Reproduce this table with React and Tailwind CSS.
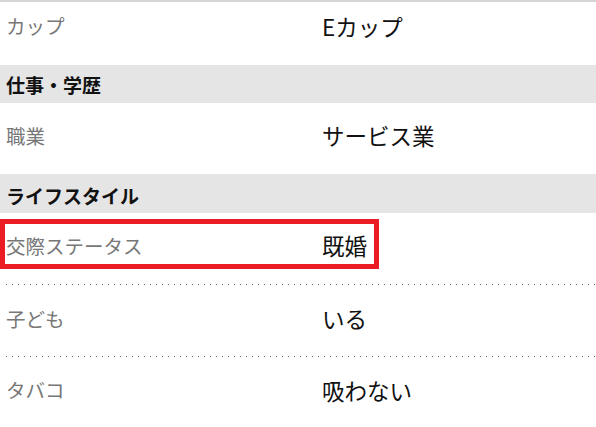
const font = { fontFamily: '"Noto Sans CJK JP", "Noto Sans", sans-serif' };

function Row({ label, value, className = "h-[72px]", highlight = false, dotted = false }) {
  return (
    <div className={`relative flex items-center ${className}`}>
      <span className="w-[322px] pl-[6px] text-[19.5px] text-[#777]">{label}</span>
      <span className="text-[22.5px] text-[#111]">{value}</span>
      {highlight && (
        <div className="absolute left-0 top-[6px] h-[50px] w-[379px] border-[5px] border-[#ec1c24]" />
      )}
      {dotted && (
        <div className="absolute bottom-0 left-[6px] right-0 h-px bg-[linear-gradient(to_right,#666_1px,transparent_1px)] bg-[length:6px_1px]" />
      )}
    </div>
  );
}

function Header({ children, className = "h-[38px]" }) {
  return (
    <div className={`flex items-center bg-[#e5e5e5] pl-[6px] text-[19px] font-bold text-[#111] ${className}`}>
      {children}
    </div>
  );
}

export default function App() {
  return (
    <div className="h-[427px] w-[596px] overflow-hidden bg-white leading-none" style={font}>
      <div className="h-[2px] bg-[#d5d5d5]" />
      <Row label="カップ" value="Eカップ" className="h-[63px] pb-[15px]" />
      <Header>仕事・学歴</Header>
      <Row label="職業" value="サービス業" className="h-[71px] pb-[6px]" />
      <Header className="h-[39px] pt-[3px]">ライフスタイル</Header>
      <Row label="交際ステータス" value="既婚" className="h-[72px] pb-[7px]" highlight dotted />
      <Row label="子ども" value="いる" className="h-[72px] pb-[5px]" dotted />
      <Row label="タバコ" value="吸わない" className="h-[72px] pb-[6px]" />
    </div>
  );
}
